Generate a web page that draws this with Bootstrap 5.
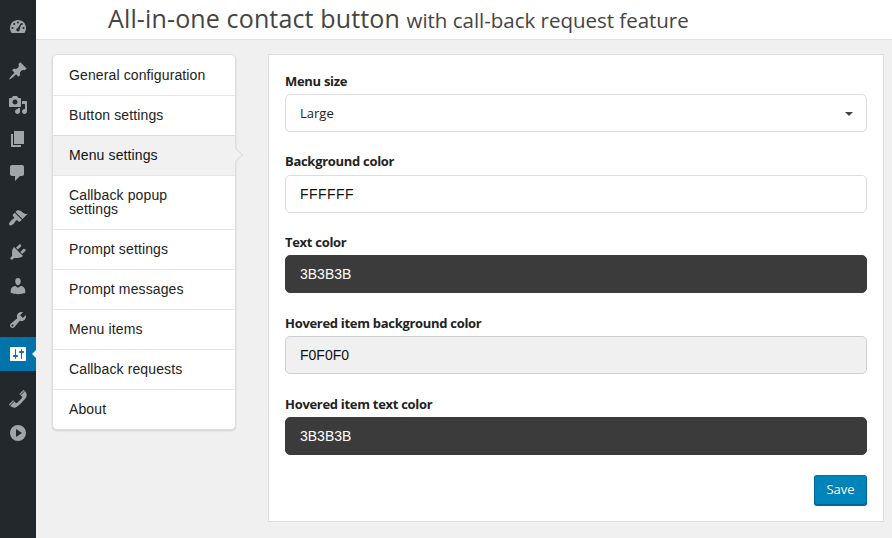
<!DOCTYPE html>
<html lang="en">
<head>
<meta charset="utf-8">
<title>All-in-one contact button</title>
<link href="https://cdn.jsdelivr.net/npm/bootstrap@5.3.0/dist/css/bootstrap.min.css" rel="stylesheet">
<style>
body{background:#f0f0f0;font-family:"Open Sans","Noto Sans",sans-serif;font-size:13px;color:#222}
.app-shell{height:538px}
.admin-rail{width:36px;background:#23282d;padding-top:9px;color:#a0a5aa}
.rail-link{height:34px;color:inherit}
.rail-link svg{width:20px;height:20px;fill:currentColor}
.rail-gap{margin-top:11px}
.rail-link.current{background:#0073aa;color:#fff}
.rail-link.current::after{content:"";position:absolute;right:0;top:13px;border:4px solid transparent;border-right-color:#f0f0f0;border-left:0}
.page-head{height:40px;border-bottom:1px solid #dae3e9;padding-left:72px}
.page-head h1{font-size:25px;line-height:37px;color:#444;letter-spacing:.14px;white-space:nowrap}
.page-head h1 span{font-size:20.5px;letter-spacing:-.02px}
.page-main{padding:14px 8px 16px 16px;gap:32px}
.tab-menu{width:184px;border:1px solid #ddd;border-radius:5px;box-shadow:0 1px 2px rgba(34,36,38,.15);font-family:"Liberation Sans",Arial,sans-serif;font-size:14px;line-height:14px;letter-spacing:.12px}
.tab-menu .nav-link{color:#222;padding:12px 50px 13px 16px;border-bottom:1px solid #e6e6e6;border-radius:0;white-space:normal}
.tab-menu .nav-link.one-line{padding-right:0}
.tab-menu .nav-link:first-child{padding-top:13px}
.tab-menu .nav-link:last-child{border-bottom:0}
.tab-menu .nav-link.active{background:#f1f1f1;color:#111;box-shadow:0 -1px #dcdcdc}
.tab-menu .nav-link.active::after{content:"";position:absolute;right:-6px;top:14px;width:10px;height:10px;background:#f1f1f1;border:solid #ddd;border-width:1px 1px 0 0;transform:rotate(45deg)}
.settings-panel{background:#fff;border:1px solid #ddd;height:468px;padding:17px 16px 15px}
.field-group{height:81px}
.field-group.first-field{height:80px}
.field-group .form-label{display:block;font-weight:700;font-size:13px;line-height:18px;margin:0 0 4px;letter-spacing:-.3px}
.field-group.first-field + .field-group .form-label{margin-bottom:5px}
.field-group .form-control{height:38px;border:1px solid #ddd;border-radius:5px;padding:0 14px;font-family:"Liberation Sans",Arial,sans-serif;font-size:14px;color:#111}
.field-group .hex-wide{letter-spacing:.45px}
.field-group .size-pick{font-family:"Open Sans","Noto Sans",sans-serif;font-size:13px;color:#222;padding:2px 13px 0 14px}
.size-pick svg{width:8px;height:4px;fill:#444}
.field-group .swatch-dark{background:#3b3b3b;border-color:#3b3b3b;color:#fff}
.field-group .swatch-light{background:#f0f0f0;border-color:#d0d0d0}
.save-row{margin-top:-1px}
.btn-save{width:53px;height:30px;padding:0;background:#0085ba;border:1px solid;border-color:#0073aa #006799 #006799;box-shadow:0 1px 0 #006799;border-radius:3px;color:#fff;font-size:13px;text-shadow:0 -1px 1px #006799}
</style>
</head>
<body>
<div class="app-shell d-flex overflow-hidden">
  <nav class="admin-rail d-flex flex-column flex-shrink-0">
    <a class="rail-link d-flex align-items-center justify-content-center"><svg viewBox="0 0 20 20"><path d="M3.76 17h12.48c1.1-1.37 1.76-3.11 1.76-5 0-4.42-3.58-8-8-8s-8 3.58-8 8c0 1.89.66 3.63 1.76 5z"/><g fill="#23282d"><circle cx="10" cy="6.5" r="1"/><circle cx="6.2" cy="8" r="1"/><circle cx="13.8" cy="8" r="1"/><circle cx="4.5" cy="12" r="1"/><circle cx="15.5" cy="12" r="1"/><path d="M12.6 7.6l.7.4-1.6 5.2c.3 1.2-.5 2.3-1.7 2.3s-2-1-1.7-2.2c.2-.7.8-1.2 1.5-1.3z"/></g></svg></a>
    <a class="rail-link rail-gap d-flex align-items-center justify-content-center"><svg viewBox="0 0 20 20"><path d="M10.44 3.02l1.82-1.82 6.36 6.35-1.83 1.82c-1.05-.68-2.48-.57-3.41.36l-.75.75c-.92.93-1.04 2.35-.35 3.41l-1.83 1.82-2.41-2.41-2.8 2.79c-.42.42-3.38 2.71-3.8 2.29s1.86-3.39 2.28-3.81l2.79-2.79L4.1 9.36l1.83-1.82c1.05.69 2.48.57 3.4-.36l.75-.75c.93-.92 1.05-2.35.36-3.41z"/></svg></a>
    <a class="rail-link d-flex align-items-center justify-content-center"><svg viewBox="0 0 20 20"><path fill-rule="evenodd" d="M13 11V4c0-.55-.45-1-1-1h-1.67L9 1H5L3.67 3H2c-.55 0-1 .45-1 1v7c0 .55.45 1 1 1h10c.55 0 1-.45 1-1zM7 4.5c1.38 0 2.5 1.12 2.5 2.5S8.38 9.5 7 9.5 4.5 8.38 4.5 7 5.62 4.5 7 4.5zM14 6h5v10.5c0 1.38-1.12 2.5-2.5 2.5S14 17.88 14 16.5s1.12-2.5 2.5-2.5c.17 0 .34.02.5.05V9h-3V6zm-4 8.05V13h2v3.5c0 1.38-1.12 2.5-2.5 2.5S7 17.88 7 16.5 8.12 14 9.5 14c.17 0 .34.02.5.05z"/></svg></a>
    <a class="rail-link d-flex align-items-center justify-content-center"><svg viewBox="0 0 20 20"><path d="M6 15V2h10v13H6zm-1 1h8v2H3V5h2v11z"/></svg></a>
    <a class="rail-link d-flex align-items-center justify-content-center"><svg viewBox="0 0 20 20"><path d="M4 2h10c1.100 0 2 .9 2 2v7c0 1.100-.9 2-2 2h-2l-5 5v-5H4c-1.100 0-2-.9-2-2V4c0-1.100.9-2 2-2z"/></svg></a>
    <a class="rail-link rail-gap d-flex align-items-center justify-content-center"><svg viewBox="0 0 20 20"><path d="M14.480 11.060L7.410 3.990l1.500-1.500c.5-.56 2.300-.47 3.510.32 1.210.8 1.430 1.280 2.910 2.100 1.180.64 2.450 1.260 4.450.85zm-.71.71L6.700 4.700 4.930 6.470c-.39.39-.39 1.020 0 1.410l1.060 1.060c.39.39.39 1.030 0 1.420-.6.6-1.430 1.110-2.210 1.690-.35.26-.7.53-1.010.84C1.430 14.230.4 16.080 1.400 17.070c.99 1 2.840-.03 4.180-1.360.31-.31.58-.66.85-1.020.57-.78 1.080-1.610 1.690-2.210.39-.39 1.020-.39 1.410 0l1.060 1.060c.39.39 1.020.39 1.410 0z"/></svg></a>
    <a class="rail-link d-flex align-items-center justify-content-center"><svg viewBox="0 0 20 20"><path d="M13.110 4.360L9.870 7.600 8 5.730l3.240-3.240c.35-.34 1.050-.2 1.560.32.52.51.66 1.210.31 1.550zm-8 1.770l.91-1.120 9.010 9.010-1.190.84c-.71.71-2.630 1.160-3.820 1.160H6.140L4.900 17.260c-.59.59-1.540.59-2.120 0-.59-.58-.59-1.530 0-2.120l1.240-1.240v-3.880c0-1.130.4-3.190 1.090-3.890zm7.260 3.970l3.240-3.240c.34-.35 1.040-.21 1.550.31.52.51.66 1.210.31 1.550l-3.240 3.250z"/></svg></a>
    <a class="rail-link d-flex align-items-center justify-content-center"><svg viewBox="0 0 20 20"><path d="M10 9.250c-2.270 0-2.730-3.440-2.730-3.440C7 4.020 7.820 2 9.970 2c2.160 0 2.980 2.020 2.710 3.810 0 0-.41 3.440-2.680 3.440zm0 2.570L12.720 10c2.390 0 4.520 2.330 4.520 4.530v2.490s-3.650 1.130-7.240 1.130c-3.650 0-7.240-1.130-7.240-1.130v-2.490c0-2.250 1.940-4.480 4.470-4.480z"/></svg></a>
    <a class="rail-link d-flex align-items-center justify-content-center"><svg viewBox="0 0 20 20"><path fill-rule="evenodd" d="M16.680 9.770c-1.340 1.340-3.300 1.670-4.950.99l-5.410 6.520c-.99.99-2.590.99-3.580 0s-.99-2.590 0-3.570l6.520-5.420c-.68-1.650-.35-3.610.99-4.950 1.280-1.280 3.120-1.620 4.720-1.060l-2.890 2.890 2.820 2.820 2.860-2.870c.53 1.580.18 3.390-1.080 4.650zM3.810 16.210c.4.39 1.040.39 1.430 0 .4-.4.4-1.040 0-1.430-.39-.4-1.030-.4-1.430 0-.39.39-.39 1.030 0 1.430z"/></svg></a>
    <a class="rail-link current position-relative d-flex align-items-center justify-content-center"><svg viewBox="0 0 20 20"><path fill-rule="evenodd" d="M18 16V4c0-.55-.45-1-1-1H3c-.55 0-1 .45-1 1v12c0 .55.45 1 1 1h14c.55 0 1-.45 1-1zM8 11h1c.55 0 1 .45 1 1s-.45 1-1 1H8v1.500c0 .28-.22.5-.5.5s-.5-.22-.5-.5V13H6c-.55 0-1-.45-1-1s.45-1 1-1h1V5.500c0-.28.22-.5.5-.5s.5.22.5.5V11zm5-2h-1c-.55 0-1-.45-1-1s.45-1 1-1h1V5.500c0-.28.22-.5.5-.5s.5.22.5.5V7h1c.55 0 1 .45 1 1s-.45 1-1 1h-1v5.500c0 .28-.22.5-.5.5s-.5-.22-.5-.5V9z"/></svg></a>
    <a class="rail-link rail-gap d-flex align-items-center justify-content-center"><svg viewBox="0 0 20 20"><path d="M12.060 6l-.21-.2c-.52-.54-.43-.79.08-1.300l2.720-2.750c.81-.82.96-1.210 1.730-.48l.21.2zm.53.450l4.400-4.400c.7.94 2.340 3.470 1.530 5.340-.73 1.670-1.090 1.750-2 3-1.850 2.110-4.180 4.370-6 6.070-1.260.91-1.310 1.330-3 2-1.800.71-4.400-.89-5.380-1.560l4.400-4.400 1.180 1.620c.34.46 1.200-.06 1.800-.66 1.040-1.050 3.180-3.180 4-4.070.59-.59 1.120-1.450.66-1.800zM1.570 16.500l-.21-.21c-.68-.74-.29-.9.52-1.700l2.740-2.720c.51-.49.75-.6 1.270-.11l.2.21z"/></svg></a>
    <a class="rail-link d-flex align-items-center justify-content-center"><svg viewBox="0 0 20 20"><path fill-rule="evenodd" d="M10 2a8 8 0 100 16 8 8 0 000-16zM8 6l6 4-6 4z"/></svg></a>
  </nav>
  <div class="flex-grow-1 d-flex flex-column">
    <header class="page-head bg-white"><h1 class="m-0 fw-normal">All-in-one contact button <span>with call-back request feature</span></h1></header>
    <main class="page-main d-flex align-items-start">
      <nav class="tab-menu nav flex-column flex-nowrap flex-shrink-0 bg-white">
        <a class="nav-link one-line">General configuration</a>
        <a class="nav-link">Button settings</a>
        <a class="nav-link active position-relative">Menu settings</a>
        <a class="nav-link">Callback popup settings</a>
        <a class="nav-link">Prompt settings</a>
        <a class="nav-link one-line">Prompt messages</a>
        <a class="nav-link">Menu items</a>
        <a class="nav-link one-line">Callback requests</a>
        <a class="nav-link">About</a>
      </nav>
      <section class="settings-panel flex-grow-1">
        <div class="field-group first-field"><span class="form-label">Menu size</span><div class="form-control size-pick d-flex align-items-center justify-content-between"><span>Large</span><svg viewBox="0 0 8 4"><path d="M0 0h8L4 4z"/></svg></div></div>
        <div class="field-group"><span class="form-label">Background color</span><div class="form-control hex-wide d-flex align-items-center">FFFFFF</div></div>
        <div class="field-group"><span class="form-label">Text color</span><div class="form-control swatch-dark d-flex align-items-center">3B3B3B</div></div>
        <div class="field-group"><span class="form-label">Hovered item background color</span><div class="form-control swatch-light d-flex align-items-center">F0F0F0</div></div>
        <div class="field-group"><span class="form-label">Hovered item text color</span><div class="form-control swatch-dark d-flex align-items-center">3B3B3B</div></div>
        <div class="save-row d-flex justify-content-end"><button class="btn btn-save" type="button">Save</button></div>
      </section>
    </main>
  </div>
</div>
<script src="https://cdn.jsdelivr.net/npm/bootstrap@5.3.0/dist/js/bootstrap.bundle.min.js"></script>
</body>
</html>
